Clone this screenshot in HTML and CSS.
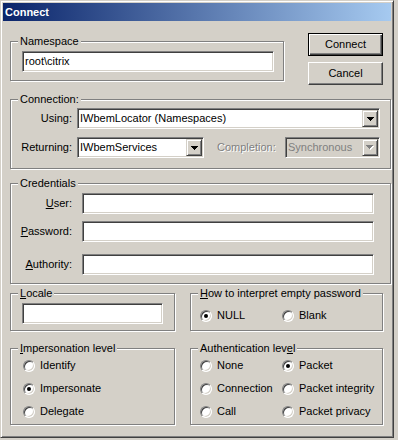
FILE: index.html
```html
<!DOCTYPE html>
<html lang="en">
<head>
  <meta charset="UTF-8" />
  <title>Connect</title>
  <link rel="stylesheet" href="styles.css">
</head>
<body>
  <div class="window">
    <div class="titlebar">Connect</div>

    <div class="dialog">
      <div class="top-row">
        <div class="group ns-group">
          <div class="group-title">Namespace</div>
          <div class="edit ns-edit">root\citrix</div>
        </div>
        <div class="buttons">
          <div class="button default">Connect</div>
          <div class="button">Cancel</div>
        </div>
      </div>

      <div class="group conn-group">
        <div class="group-title">Connection:</div>
        <div class="field-row">
          <span class="label">Using:</span>
          <div class="combo using-combo">
            <span class="combo-text">IWbemLocator (Namespaces)</span>
            <span class="combo-btn">
              <svg width="7" height="4" viewBox="0 0 7 4"><path d="M0 0h7v1h-1v1h-1v1h-1v1h-1v-1h-1v-1h-1v-1h-1z" fill="#000"/></svg>
            </span>
          </div>
        </div>
        <div class="field-row second">
          <span class="label">Returning:</span>
          <div class="combo returning-combo">
            <span class="combo-text">IWbemServices</span>
            <span class="combo-btn">
              <svg width="7" height="4" viewBox="0 0 7 4"><path d="M0 0h7v1h-1v1h-1v1h-1v1h-1v-1h-1v-1h-1v-1h-1z" fill="#000"/></svg>
            </span>
          </div>
          <span class="label-disabled">Completion:</span>
          <div class="combo combo-disabled completion-combo">
            <span class="combo-text">Synchronous</span>
            <span class="combo-btn">
              <svg width="8" height="5" viewBox="0 0 8 5"><path d="M1 1h7v1h-1v1h-1v1h-1v1h-1v-1h-1v-1h-1v-1h-1z" fill="#fff"/><path d="M0 0h7v1h-1v1h-1v1h-1v1h-1v-1h-1v-1h-1v-1h-1z" fill="#808080"/></svg>
            </span>
          </div>
        </div>
      </div>

      <div class="group cred-group">
        <div class="group-title">Credentials</div>
        <div class="field-row">
          <span class="label"><u>U</u>ser:</span>
          <div class="edit cred-edit"></div>
        </div>
        <div class="field-row pw-row">
          <span class="label"><u>P</u>assword:</span>
          <div class="edit cred-edit"></div>
        </div>
        <div class="field-row auth-row">
          <span class="label"><u>A</u>uthority:</span>
          <div class="edit cred-edit"></div>
        </div>
      </div>

      <div class="pair-row locale-row">
        <div class="group small-group locale-group">
          <div class="group-title"><u>L</u>ocale</div>
          <div class="edit locale-edit"></div>
        </div>
        <div class="group wide-group empty-group">
          <div class="group-title"><u>H</u>ow to interpret empty password</div>
          <div class="options two-col">
            <div class="option"><span class="radio checked"></span>NULL</div>
            <div class="option"><span class="radio"></span>Blank</div>
          </div>
        </div>
      </div>

      <div class="pair-row level-row">
        <div class="group small-group imp-group">
          <div class="group-title"><u>I</u>mpersonation level</div>
          <div class="options">
            <div class="option"><span class="radio"></span>Identify</div>
            <div class="option"><span class="radio checked"></span>Impersonate</div>
            <div class="option"><span class="radio"></span>Delegate</div>
          </div>
        </div>
        <div class="group wide-group authn-group">
          <div class="group-title">Authentication lev<u>e</u>l</div>
          <div class="options two-col">
            <div class="option"><span class="radio"></span>None</div>
            <div class="option"><span class="radio checked"></span>Packet</div>
            <div class="option"><span class="radio"></span>Connection</div>
            <div class="option"><span class="radio"></span>Packet integrity</div>
            <div class="option"><span class="radio"></span>Call</div>
            <div class="option"><span class="radio"></span>Packet privacy</div>
          </div>
        </div>
      </div>
    </div>
  </div>
</body>
</html>
```

FILE: styles.css
```css
:root {
  --face: #d4d0c8;
  --shadow: #808080;
  --dark: #404040;
  --light: #ffffff;
}

html, body {
  margin: 0;
  background: var(--face);
}

body {
  font-family: 'Liberation Sans', Arial, sans-serif;
  font-size: 11px;
  line-height: 13px;
  color: #000;
}

.window {
  width: 394px;
  height: 438px;
  box-sizing: border-box;
  border: 1px solid;
  border-color: var(--face) var(--dark) var(--dark) var(--face);
  box-shadow: inset 1px 1px 0 var(--light), inset -1px -1px 0 var(--shadow);
  padding: 2px;
  background: var(--face);
}

.titlebar {
  height: 18px;
  line-height: 18px;
  padding-left: 2px;
  background: linear-gradient(to right, #0a246a, #a6caf0);
  color: #fff;
  font-weight: bold;
}

.dialog {
  padding-left: 7px;
}

/* etched group box
   --pad: space from the top line to the first control
   --indent: left inset of the controls */
.group {
  --pad: 9px;
  --indent: 0px;
  box-sizing: border-box;
  padding-left: var(--indent);
  border: 1px solid var(--shadow);
  box-shadow: inset 1px 1px 0 var(--light), 1px 1px 0 var(--light);
}

.group-title {
  width: fit-content;
  margin: -7px 0 calc(var(--pad) - 6px) calc(7px - var(--indent));
  padding: 0 2px;
  background: var(--face);
  white-space: nowrap;
}

/* sunken edit field */
.edit {
  box-sizing: border-box;
  height: 21px;
  line-height: 19px;
  padding: 0 2px;
  border: 1px solid;
  border-color: var(--shadow) var(--light) var(--light) var(--shadow);
  box-shadow: inset 1px 1px 0 var(--dark), inset -1px -1px 0 var(--face);
  background: #fff;
  white-space: nowrap;
}

.top-row {
  display: flex;
  align-items: flex-start;
  margin-top: 12px;
}

.ns-group {
  --indent: 11px;
  width: 274px;
  height: 40px;
  margin-top: 8px;
}

.ns-edit {
  width: 252px;
}

.buttons {
  display: flex;
  flex-direction: column;
  gap: 6px;
  margin-left: 24px;
}

.button {
  box-sizing: border-box;
  width: 75px;
  height: 23px;
  line-height: 21px;
  text-align: center;
  border: 1px solid;
  border-color: var(--light) var(--dark) var(--dark) var(--light);
  box-shadow: inset -1px -1px 0 var(--shadow), inset 1px 1px 0 var(--face);
}

.button.default {
  border-color: #000;
  box-shadow: inset 1px 1px 0 var(--light), inset -1px -1px 0 var(--dark), inset -2px -2px 0 var(--shadow);
}

.conn-group {
  --pad: 8px;
  margin-top: 14px;
  height: 70px;
  padding-right: 10px;
}

.field-row {
  display: flex;
  align-items: center;
}

.field-row.second {
  margin-top: 8px;
}

.label {
  box-sizing: border-box;
  width: 62px;
  padding-right: 1px;
  text-align: right;
  white-space: nowrap;
}

.combo {
  box-sizing: border-box;
  display: flex;
  align-items: center;
  height: 21px;
  padding: 1px;
  border: 1px solid;
  border-color: var(--shadow) var(--light) var(--light) var(--shadow);
  box-shadow: inset 1px 1px 0 var(--dark), inset -1px -1px 0 var(--face);
  background: #fff;
}

.combo-text {
  flex: 1;
  padding-left: 1px;
  white-space: nowrap;
  overflow: hidden;
}

.combo-btn {
  box-sizing: border-box;
  display: flex;
  align-items: center;
  justify-content: center;
  width: 16px;
  height: 17px;
  border: 1px solid;
  border-color: var(--face) var(--dark) var(--dark) var(--face);
  box-shadow: inset 1px 1px 0 var(--light), inset -1px -1px 0 var(--shadow);
  background: var(--face);
}

.combo-btn svg {
  display: block;
  shape-rendering: crispEdges;
}

.using-combo {
  flex: 1;
  margin-left: 4px;
}

.returning-combo {
  width: 127px;
  margin-left: 4px;
}

.label-disabled {
  margin-left: 13px;
  color: var(--shadow);
  text-shadow: 1px 1px 0 var(--light);
  white-space: nowrap;
}

.combo-disabled {
  background: var(--face);
  color: var(--shadow);
}

.completion-combo {
  width: 95px;
  margin-left: auto;
}

.cred-group {
  margin-top: 14px;
  height: 101px;
}

.cred-edit {
  width: 292px;
  margin-left: 9px;
}

.pw-row {
  margin-top: 7px;
}

.auth-row {
  margin-top: 12px;
}

.pair-row {
  display: flex;
  gap: 15px;
}

.locale-row {
  margin-top: 9px;
}

.level-row {
  margin-top: 17px;
}

.small-group {
  width: 165px;
}

.wide-group {
  width: 193px;
}

.locale-group,
.empty-group {
  height: 38px;
}

.locale-group {
  --indent: 11px;
}

.locale-edit {
  width: 141px;
}

.empty-group {
  --pad: 15px;
  --indent: 9px;
}

.imp-group,
.authn-group {
  --pad: 10px;
  height: 77px;
}

.imp-group {
  --indent: 12px;
}

.authn-group {
  --indent: 9px;
}

.options {
  display: grid;
  row-gap: 10px;
}

.options.two-col {
  grid-template-columns: 82px auto;
}

.option {
  display: flex;
  align-items: center;
  gap: 5px;
  height: 13px;
  white-space: nowrap;
}

.radio {
  box-sizing: border-box;
  display: flex;
  align-items: center;
  justify-content: center;
  flex: none;
  width: 12px;
  height: 12px;
  border-radius: 50%;
  border: 1px solid;
  border-color: var(--shadow) var(--light) var(--light) var(--shadow);
  box-shadow: inset 1px 1px 0 var(--dark), inset -1px -1px 0 var(--face);
  background: #fff;
}

.radio.checked::after {
  content: "";
  width: 4px;
  height: 4px;
  border-radius: 50%;
  background: #000;
}
```
